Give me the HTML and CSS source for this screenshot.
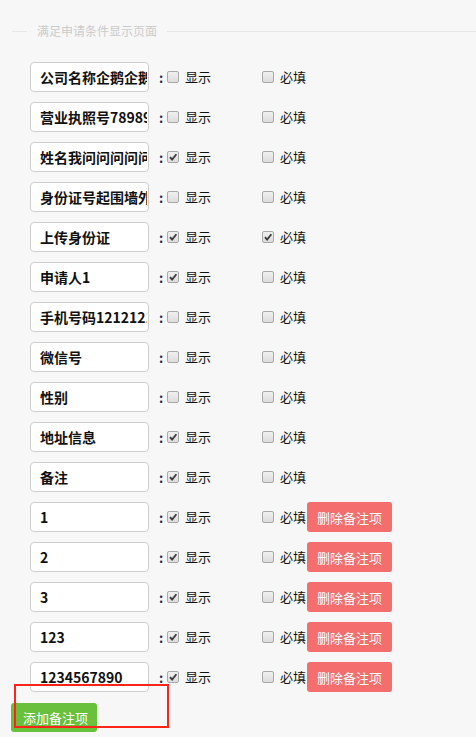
FILE: index.html
```html
<!DOCTYPE html>
<html lang="zh-CN">
<head>
    <meta charset="UTF-8">
    <meta name="viewport" content="width=device-width, initial-scale=1.0">
    <title>满足申请条件显示页面</title>
    <link rel="stylesheet" href="styles.css">
</head>
<body>
    <div class="legend">
        <span class="legend-line short"></span>
        <span class="legend-text">满足申请条件显示页面</span>
        <span class="legend-line"></span>
    </div>
    <div class="rows" id="rows"></div>
    <button class="add-btn">添加备注项</button>
    <div class="mark"></div>

    <script>
        const items = [
            { name: '公司名称企鹅企鹅企鹅', show: false, must: false },
            { name: '营业执照号7898989', show: false, must: false },
            { name: '姓名我问问问问问问', show: true, must: false },
            { name: '身份证号起围墙外面', show: false, must: false },
            { name: '上传身份证', show: true, must: true },
            { name: '申请人1', show: true, must: false },
            { name: '手机号码12121212', show: false, must: false },
            { name: '微信号', show: false, must: false },
            { name: '性别', show: false, must: false },
            { name: '地址信息', show: true, must: false },
            { name: '备注', show: true, must: false },
            { name: '1', show: true, must: false, extra: true },
            { name: '2', show: true, must: false, extra: true },
            { name: '3', show: true, must: false, extra: true },
            { name: '123', show: true, must: false, extra: true },
            { name: '1234567890', show: true, must: false, extra: true }
        ];
        const tick = '<svg viewBox="0 0 12 12" width="12" height="12"><path d="M3 6.2 L5.1 8.6 L9.4 3.2" fill="none" stroke="#3a3a3a" stroke-width="1.8"/></svg>';
        const box = (on) => `<span class="box">${on ? tick : ''}</span>`;
        const rows = document.getElementById('rows');

        rows.innerHTML = items.map(item => `
            <div class="row">
                <input class="field" type="text" value="${item.name}">
                <span class="colon">:</span>
                <label class="check show">${box(item.show)}<span class="txt">显示</span></label>
                <label class="check must">${box(item.must)}<span class="txt">必填</span></label>
                ${item.extra ? '<button class="del-btn">删除备注项</button>' : ''}
            </div>`).join('');
    </script>
</body>
</html>
```

FILE: styles.css
```css
*{
    margin:0;
    padding:0;
    box-sizing: border-box;
}
body{
    background:#f7f7f7;
    font-family: "Noto Sans CJK SC", "Liberation Sans", sans-serif;
    font-size:13px;
    color:#222;
    height:737px;
    position:relative;
    overflow:hidden;
}
.legend{
    display:flex;
    align-items:center;
    height:14px;
    margin:24px 0 0 12px;
}
.legend-line{
    flex:1;
    height:1px;
    background:#e6e6e6;
}
.legend-line.short{
    flex:none;
    width:15px;
}
.legend-text{
    padding:0 10px;
    font-size:12px;
    color:#cbcbcb;
    line-height:14px;
}
.rows{
    margin-top:24px;
    padding-left:30px;
    display:flex;
    flex-direction:column;
    gap:10px;
}
.row{
    display:flex;
    align-items:center;
    height:30px;
}
.field{
    width:119px;
    height:30px;
    border:1px solid #cfcfcf;
    border-radius:4px;
    background:#fff;
    padding:0 1px 0 9px;
    font-family: "Noto Sans CJK SC", "Liberation Sans", sans-serif;
    font-size:14px;
    font-weight:bold;
    color:#111;
    outline:none;
}
.colon{
    width:8px;
    margin-left:10px;
    font-weight:bold;
    color:#2b2b4a;
    line-height:13px;
}
.check{
    display:flex;
    align-items:center;
    gap:6px;
}
.txt{
    line-height:13px;
    margin-top:-2px;
    color:#111;
}
.check.show{
    width:95px;
}
.check.must{
    width:45px;
}
.box{
    width:12px;
    height:12px;
    border:1px solid #a9a9a9;
    border-radius:2px;
    background:linear-gradient(#f0f0f0, #dcdcdc);
    display:flex;
}
.box svg{
    margin:-1px;
}
.del-btn{
    width:85px;
    height:30px;
    border:none;
    border-radius:3px;
    background:#f46e6e;
    color:#fff;
    font-family: "Noto Sans CJK SC", "Liberation Sans", sans-serif;
    font-size:13px;
}
.add-btn{
    display:block;
    margin:11px 0 0 11px;
    width:86px;
    height:29px;
    border:none;
    border-radius:3px;
    background:#69c03d;
    color:#fff;
    font-family: "Noto Sans CJK SC", "Liberation Sans", sans-serif;
    font-size:13px;
    text-align:left;
    padding-left:12px;
}
.mark{
    position:absolute;
    left:14px;
    top:684px;
    width:155px;
    height:44px;
    border:2px solid #ff2418;
}
```
